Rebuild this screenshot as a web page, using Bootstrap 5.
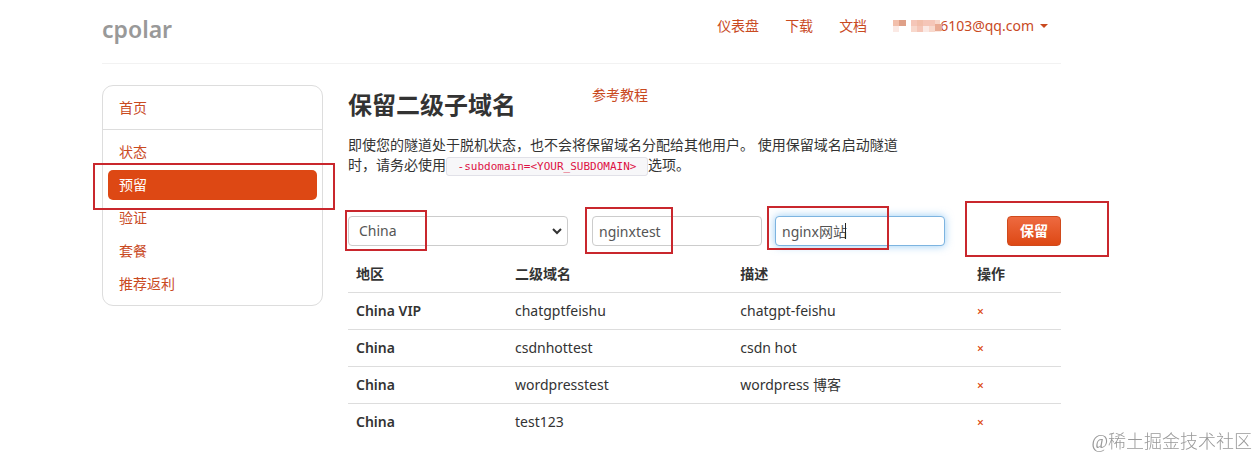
<!DOCTYPE html>
<html lang="zh-CN">
<head>
<meta charset="utf-8">
<meta name="viewport" content="width=device-width, initial-scale=1">
<title>cpolar</title>
<link href="https://cdn.jsdelivr.net/npm/bootstrap@5.3.0/dist/css/bootstrap.min.css" rel="stylesheet">
<style>
body{font:14px/20px "Noto Sans","Noto Sans CJK SC",sans-serif;color:#333}
a{color:#c94a1f;text-decoration:none}
a:hover{color:#dd4814}
.site{max-width:959px;margin-left:102px}
.site-head{height:64px;border-bottom:1px solid #f2f2f2;margin-bottom:21px;padding:0 13px 11px 0}
.brand{font-size:23px;line-height:28px;font-weight:600;color:#999;padding-top:6px}
.menu{gap:26px}
.mosaic{margin-right:-3px;z-index:1}
.caret{border:4px solid transparent;border-top-color:currentColor;border-bottom:0;margin-left:6px}
.layout{display:grid;grid-template-columns:221px minmax(0,1fr);gap:25px;align-items:start}
.side{border:1px solid #ddd;border-radius:11px;padding-bottom:3px}
.side a{display:block;padding:5px 11px;margin:0 5px 3px;border-radius:5px;line-height:20px}
.side .home{margin:0 0 7px;padding:12px 16px 11px;border-bottom:1px solid #ddd;border-radius:0}
.side .active{background:#dd4814;color:#fff}
.title-row{display:grid;grid-template-columns:220px 1fr;gap:24px}
h1{font-size:24px;line-height:40px;font-weight:700;margin:0}
.intro{max-width:560px;margin:10px 0 41px}
.intro code{font:11px/16px "DejaVu Sans Mono","Liberation Mono",monospace;white-space:pre;color:#d14;background:#f7f7f9;border:1px solid #e1e1e8;border-radius:3px;padding:2px 4px}
.reserve{display:grid;grid-template-columns:220fr 24fr 170fr 13fr 170fr 116fr;align-items:center}
.reserve .form-control,.reserve .form-select{height:30px;font-size:14px;line-height:20px;padding:4px 6px;color:#555;border:1px solid #ccc;border-radius:4px}
.reserve .form-select{padding-left:10px;background-position:right 5px center;background-size:10px 10px;background-image:url("data:image/svg+xml,%3Csvg xmlns='http://www.w3.org/2000/svg' viewBox='0 0 10 10'%3E%3Cpath d='M1 3l4 4 4-4' fill='none' stroke='%23333' stroke-width='2'/%3E%3C/svg%3E")}
.reserve .lit{border-color:#7db4e0;box-shadow:0 0 8px rgba(82,168,236,.6)}
.reserve .btn{width:54px;height:30px;padding:0;font-size:14px;line-height:20px;font-weight:700;color:#fff;border:1px solid #d04a1c;border-radius:4px;background:linear-gradient(#ee6a40,#dd4814)}
.name-box{grid-column:3}.note-box{grid-column:5}
.send-box{justify-self:end}
.domains{margin:10px 0 0;color:#333;table-layout:fixed;--bs-table-color:#333}
.domains>:not(caption)>*>*{padding:8px;line-height:20px;border-bottom:1px solid #ddd;background:none}
.domains th{font-weight:600}
.domains td a{font-weight:600;font-size:12px;line-height:16px;color:#dd4814}
.domains tbody tr:last-child>*{border-bottom:0}
.frame{position:absolute;border:2px solid #c9272d;pointer-events:none;z-index:2}
.frame-side{inset:-7px -18px -10px -15px}
.frame-region{inset:-6px auto -5px -3px;width:82px}
.frame-name{inset:-9px auto -8px -7px;width:88px}
.frame-note{inset:-10px auto -4px -8px;width:122px}
.frame-send{inset:-15px -48px -11px -42px}
.caret-line{position:absolute;left:70px;top:7px;width:1px;height:16px;background:#222}
.stamp{position:fixed;right:7px;bottom:5px;font:300 18px/22px "Liberation Serif","Noto Sans CJK SC",serif;color:#999}
@media (max-width:1080px){.site{margin:0 auto;padding:0 16px}}
</style>
</head>
<body>
<div class="site">
  <header class="site-head d-flex justify-content-between align-items-center">
    <a class="brand" href="#">cpolar</a>
    <nav class="menu d-flex align-items-center" aria-label="主导航">
      <a href="#">仪表盘</a><a href="#">下载</a><a href="#">文档</a>
      <a class="d-flex align-items-center" href="#">
        <svg class="mosaic position-relative" width="50" height="16" viewBox="0 0 50 16" shape-rendering="crispEdges" aria-hidden="true">
          <path fill="#fbe9e4" d="M0 8h6v6H0zM18 8h30v6H18z"/>
          <path fill="#f2bfab" d="M0 2h6v6H0zM24 2h6v6h-6z"/>
          <path fill="#dfa088" d="M6 2h7v6H6z"/>
          <path fill="#f5c6b8" d="M18 2h6v6h-6zM30 2h12v6H30zM24 8h6v6h-6z"/>
          <path fill="#f8d8cc" d="M42 2h5v4h-5zM18 8h6v6h-6zM36 8h6v6h-6z"/>
          <path fill="#e9ab94" d="M42 6h7v7h-7z"/>
        </svg>
        <span>6103@qq.com</span><span class="caret"></span>
      </a>
    </nav>
  </header>
  <div class="layout">
    <nav class="side" aria-label="侧边栏">
      <a class="home" href="#">首页</a>
      <a href="#">状态</a>
      <a class="active position-relative" href="#" aria-current="page">预留<span class="frame frame-side"></span></a>
      <a href="#">验证</a>
      <a href="#">套餐</a>
      <a href="#">推荐返利</a>
    </nav>
    <main>
      <div class="title-row"><h1>保留二级子域名</h1><div><a href="#">参考教程</a></div></div>
      <p class="intro">即使您的隧道处于脱机状态，也不会将保留域名分配给其他用户。 使用保留域名启动隧道时，请务必使用<code> -subdomain=&lt;YOUR_SUBDOMAIN&gt; </code>选项。</p>
      <form class="reserve">
        <div class="position-relative"><select class="form-select" aria-label="地区"><option>China</option></select><span class="frame frame-region"></span></div>
        <div class="position-relative name-box"><input class="form-control" type="text" value="nginxtest" aria-label="二级域名"><span class="frame frame-name"></span></div>
        <div class="position-relative note-box"><input class="form-control lit" type="text" value="nginx网站" aria-label="描述"><span class="caret-line"></span><span class="frame frame-note"></span></div>
        <div class="position-relative send-box"><button class="btn d-block" type="button">保留</button><span class="frame frame-send"></span></div>
      </form>
      <table class="table domains">
        <colgroup><col style="width:22.3%"><col style="width:31.6%"><col style="width:33.2%"><col style="width:12.9%"></colgroup>
        <thead><tr><th>地区</th><th>二级域名</th><th>描述</th><th>操作</th></tr></thead>
        <tbody>
          <tr><th>China VIP</th><td>chatgptfeishu</td><td>chatgpt-feishu</td><td><a href="#">×</a></td></tr>
          <tr><th>China</th><td>csdnhottest</td><td>csdn hot</td><td><a href="#">×</a></td></tr>
          <tr><th>China</th><td>wordpresstest</td><td>wordpress 博客</td><td><a href="#">×</a></td></tr>
          <tr><th>China</th><td>test123</td><td></td><td><a href="#">×</a></td></tr>
        </tbody>
      </table>
    </main>
  </div>
</div>
<div class="stamp">@稀土掘金技术社区</div>
<script src="https://cdn.jsdelivr.net/npm/bootstrap@5.3.0/dist/js/bootstrap.bundle.min.js"></script>
</body>
</html>
